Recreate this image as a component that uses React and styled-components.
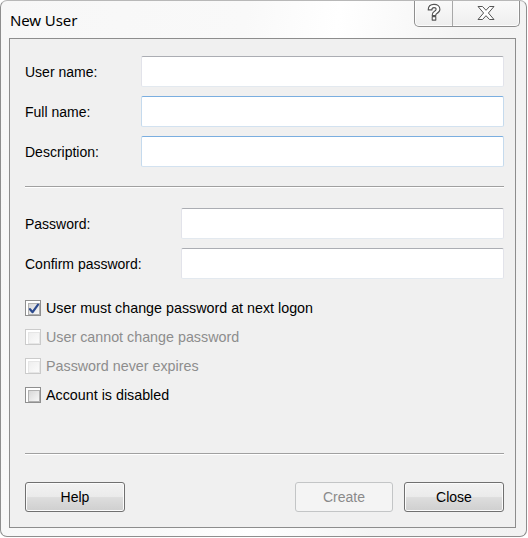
import React from "react";
import styled, { createGlobalStyle, css } from "styled-components";

const Global = createGlobalStyle`
  html, body { margin: 0; padding: 0; background: #ffffff; }
  body { font-family: "Liberation Sans", Arial, sans-serif; }
  * { box-sizing: border-box; }
`;

const Window = styled.div`
  width: 527px;
  height: 537px;
  border: 1px solid #8e8e8e;
  border-top-color: #b8b8b8;
  border-radius: 7px;
  background: linear-gradient(100deg, #f7f7f7 0%, #f9f9f9 40%, #ffffff 55%, #f4f4f4 75%, #f2f2f2 100%);
  display: flex;
  flex-direction: column;
  overflow: hidden;
`;

const TitleBar = styled.div`
  height: 37px;
  display: flex;
  align-items: flex-start;
  padding-left: 9px;
`;

const Title = styled.div`
  font-family: "Noto Sans", "Open Sans", sans-serif;
  font-size: 15px;
  color: #000;
  margin-top: 9px;
  letter-spacing: -0.1px;
`;

const Caption = styled.div`
  margin-left: auto;
  margin-right: 6px;
  margin-top: -1px;
  display: flex;
  height: 27px;
  border: 1px solid #8f8f8f;
  border-top: none;
  border-radius: 0 0 5px 5px;
  background: linear-gradient(#fafafa, #eeeeee);
  box-shadow: inset 0 0 0 1px rgba(255,255,255,0.8);
`;

const CapBtn = styled.div`
  width: ${(p) => p.$w}px;
  display: flex;
  align-items: center;
  justify-content: center;
  ${(p) => p.$divider && css`border-right: 1px solid #a8a8a8;`}
`;

const Panel = styled.div`
  margin: 0 10px 8px 8px;
  flex: 1;
  border: 1px solid #8d8d8d;
  background: #f0f0f0;
  padding: 17px 11px 15px 15px;
  display: flex;
  flex-direction: column;
`;

const Row = styled.div`
  display: grid;
  grid-template-columns: ${(p) => p.$label}px 1fr;
  align-items: center;
  height: 31px;
  margin-bottom: 9px;
`;

const Label = styled.label`
  font-size: 14px;
  color: #000;
`;

const Input = styled.div`
  height: 31px;
  background: #fff;
  border: 1px solid #e2e3ea;
  border-bottom-color: #e3e9ef;
  border-top-color: ${(p) => (p.$hover ? "#7aaee0" : "#abadb3")};
  ${(p) =>
    p.$hover &&
    css`
      border-left-color: #c5daed;
      border-right-color: #c5daed;
      border-bottom-color: #d3e2f0;
    `}
  border-radius: 2px;
`;

const Separator = styled.div`
  height: 2px;
  border-top: 1px solid #a0a0a0;
  border-bottom: 1px solid #ffffff;
  margin: ${(p) => p.$m};
`;

const CheckList = styled.div`
  display: flex;
  flex-direction: column;
  margin-top: 5px;
`;

const CheckRow = styled.div`
  display: flex;
  align-items: center;
  height: 29px;
  font-size: 14.3px;
  color: ${(p) => (p.$disabled ? "#8d8d8d" : "#000")};
`;

const Box = styled.div`
  width: 16px;
  height: 16px;
  margin-right: 5px;
  border: 1px solid ${(p) => (p.$disabled ? "#cbcbcb" : "#8f8f8f")};
  background: #fff;
  padding: 2px;
  position: relative;
  &::before {
    content: "";
    display: block;
    width: 100%;
    height: 100%;
    border: 1px solid ${(p) => (p.$disabled ? "#e6e6e6" : "#b1b1b1")};
    background: ${(p) =>
      p.$disabled
        ? "linear-gradient(135deg, #eeeeee, #fbfbfb)"
        : "linear-gradient(135deg, #d8d8d8, #f7f7f7)"};
  }
`;

const Check = styled.svg`
  position: absolute;
  left: 1px;
  top: 1px;
`;

const Spacer = styled.div`
  flex: 1;
`;

const Buttons = styled.div`
  display: flex;
  align-items: center;
  margin-top: 27px;
`;

const Button = styled.div`
  width: ${(p) => p.$w}px;
  height: 30px;
  margin-left: ${(p) => p.$ml || 0}px;
  border-radius: 3px;
  display: flex;
  align-items: center;
  justify-content: center;
  font-size: 14px;
  ${(p) =>
    p.$disabled
      ? css`
          border: 1px solid #c3c5c6;
          background: #f4f4f4;
          color: #8a8a8a;
        `
      : css`
          border: 1px solid #707070;
          color: #000;
          background: linear-gradient(#f2f2f2 0%, #ebebeb 48%, #dddddd 52%, #cfcfcf 100%);
          box-shadow: inset 0 0 0 1px #fbfbfb;
        `}
`;

const CheckBox = ({ checked, disabled }) => (
  <Box $disabled={disabled}>
    {checked && (
      <Check width="14" height="14" viewBox="0 0 14 14">
        <path d="M3 7.2 L5.6 10.2 L11 2.6" fill="none" stroke="#2c4a8e" strokeWidth="2.2" strokeLinecap="round" strokeLinejoin="round" />
      </Check>
    )}
  </Box>
);

const Help = () => (
  <svg width="16" height="20" viewBox="0 0 14 18">
    <path
      d="M1.8 6.2 C1.8 2.6 4.3 1.2 7 1.2 C10.1 1.2 12.3 3 12.3 5.6 C12.3 7.8 10.8 8.8 9.3 9.6 C8.6 10 8.6 10.3 8.6 11.2 L5.4 11.2 C5.4 9.3 5.8 8.5 7.2 7.7 C8.4 7 8.9 6.5 8.9 5.7 C8.9 4.8 8.1 4.2 7 4.2 C5.8 4.2 5.1 4.9 5.1 6.2 Z M5.4 12.3 L8.6 12.3 L8.6 15.4 L5.4 15.4 Z"
      fill="#fff"
      stroke="#555"
      strokeWidth="1"
      strokeLinejoin="round"
    />
  </svg>
);

const CloseX = () => (
  <svg width="20" height="16" viewBox="0 0 20 16">
    <path
      d="M2 1.5 L6.5 1.5 L10 5.3 L13.5 1.5 L18 1.5 L12.4 8 L18 14.5 L13.5 14.5 L10 10.7 L6.5 14.5 L2 14.5 L7.6 8 Z"
      fill="#fff"
      stroke="#555"
      strokeWidth="1"
      strokeLinejoin="round"
    />
  </svg>
);

export default function App() {
  return (
    <>
      <Global />
      <Window>
        <TitleBar>
          <Title>New User</Title>
          <Caption>
            <CapBtn $w={38} $divider>
              <Help />
            </CapBtn>
            <CapBtn $w={66}>
              <CloseX />
            </CapBtn>
          </Caption>
        </TitleBar>
        <Panel>
          <Row $label={116}>
            <Label>User name:</Label>
            <Input />
          </Row>
          <Row $label={116}>
            <Label>Full name:</Label>
            <Input $hover />
          </Row>
          <Row $label={116}>
            <Label>Description:</Label>
            <Input $hover />
          </Row>
          <Separator $m="10px 0 20px 0" />
          <Row $label={156}>
            <Label>Password:</Label>
            <Input />
          </Row>
          <Row $label={156}>
            <Label>Confirm password:</Label>
            <Input />
          </Row>
          <CheckList>
            <CheckRow>
              <CheckBox checked />
              User must change password at next logon
            </CheckRow>
            <CheckRow $disabled>
              <CheckBox disabled />
              User cannot change password
            </CheckRow>
            <CheckRow $disabled>
              <CheckBox disabled />
              Password never expires
            </CheckRow>
            <CheckRow>
              <CheckBox />
              Account is disabled
            </CheckRow>
          </CheckList>
          <Spacer />
          <Separator $m="0" />
          <Buttons>
            <Button $w={100}>Help</Button>
            <Button $w={98} $ml={170} $disabled>Create</Button>
            <Button $w={100} $ml={11}>Close</Button>
          </Buttons>
        </Panel>
      </Window>
    </>
  );
}
